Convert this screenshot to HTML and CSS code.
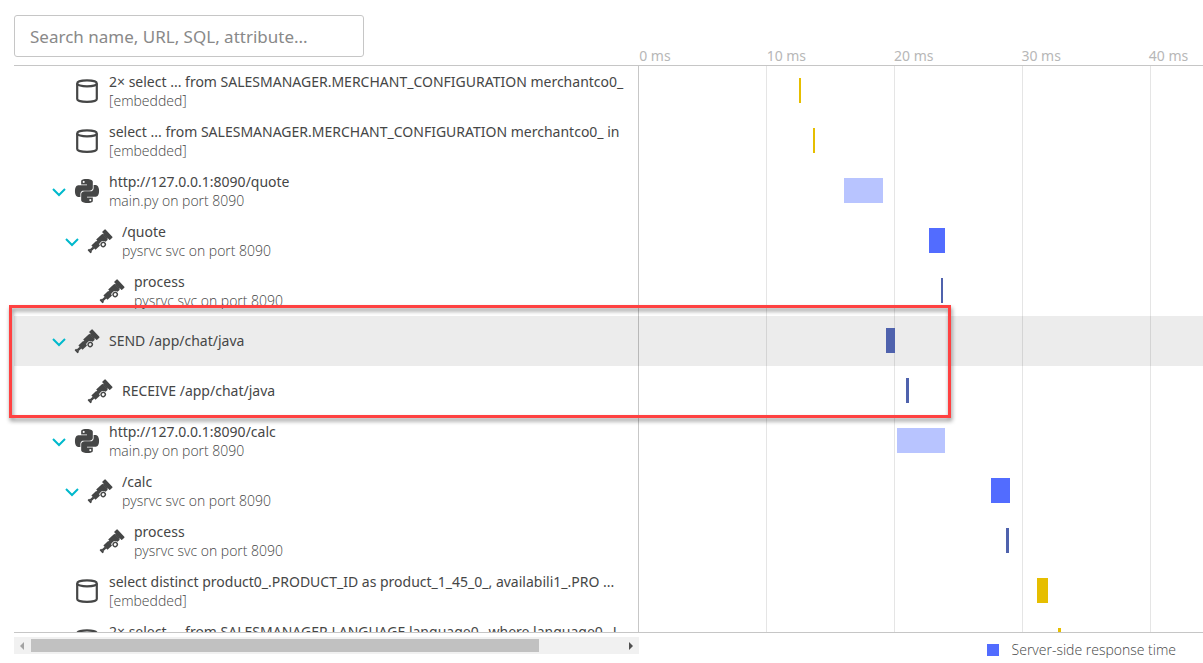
FILE: index.html
```html
<!DOCTYPE html>
<html lang="en">
<head>
<meta charset="utf-8">
<title>Distributed trace</title>
<link rel="stylesheet" href="styles.css">
</head>
<body>
<svg class="sprite" aria-hidden="true">
  <symbol id="db" viewBox="0 0 24 24"><g fill="none" stroke="currentColor" stroke-width="2.200"><ellipse cx="12" cy="4.400" rx="9.800" ry="3"/><path d="M2.200 4.400v15.600c0 1.800 4.200 2.900 9.800 2.900s9.800-1.100 9.800-2.900V4.400"/></g></symbol>
  <symbol id="python" viewBox="0 0 24 24"><path fill="currentColor" d="M14.25.18l.9.2.73.26.59.3.45.32.34.34.25.34.16.33.1.3.04.26.02.2-.01.13V8.500l-.05.63-.13.55-.21.46-.26.38-.3.31-.33.25-.35.19-.35.14-.33.1-.3.07-.26.04-.21.02H8.770l-.69.05-.59.14-.5.22-.41.27-.33.32-.27.35-.2.36-.15.37-.1.35-.07.32-.04.27-.02.21v3.060H3.170l-.21-.03-.28-.07-.32-.12-.35-.18-.36-.26-.36-.36-.35-.46-.32-.59-.28-.73-.21-.88-.14-1.050-.05-1.230.06-1.220.16-1.040.24-.87.32-.71.36-.57.4-.44.42-.33.42-.24.4-.16.36-.1.32-.05.24-.01h.16l.06.01h8.160v-.83H6.180l-.01-2.750-.02-.37.05-.34.11-.31.17-.28.25-.26.31-.23.38-.2.44-.18.51-.15.58-.12.64-.1.71-.06.77-.04.84-.02 1.270.05zm-6.300 1.980l-.23.33-.08.41.08.41.23.34.33.22.41.09.41-.09.33-.22.23-.34.08-.41-.08-.41-.23-.33-.33-.22-.41-.09-.41.09zm13.090 3.950l.28.06.32.12.35.18.36.27.36.35.35.47.32.59.28.73.21.88.14 1.040.05 1.230-.06 1.230-.16 1.040-.24.86-.32.71-.36.57-.4.45-.42.33-.42.24-.4.16-.36.09-.32.05-.24.02-.16-.01h-8.220v.82h5.840l.01 2.760.02.36-.05.34-.11.31-.17.29-.25.25-.31.24-.38.2-.44.17-.51.15-.58.13-.64.09-.71.07-.77.04-.84.01-1.270-.04-1.070-.14-.9-.2-.73-.25-.59-.3-.45-.33-.34-.34-.25-.34-.16-.33-.1-.3-.04-.25-.02-.2.01-.13v-5.340l.05-.64.13-.54.21-.46.26-.38.3-.32.33-.24.35-.2.35-.14.33-.1.3-.06.26-.04.21-.02.13-.01h5.840l.69-.05.59-.14.5-.21.41-.28.33-.32.27-.35.2-.36.15-.36.1-.35.07-.32.04-.28.02-.21V6.070h2.090l.14.01zm-6.470 14.250l-.23.33-.08.41.08.41.23.33.33.23.41.08.41-.08.33-.23.23-.33.08-.41-.08-.41-.23-.33-.33-.23-.41-.08-.41.08z"/></symbol>
  <symbol id="scope" viewBox="0 0 24 24"><g transform="translate(12 12.500) rotate(-43)"><g fill="currentColor"><rect x="-15" y="-2.200" width="2.200" height="4.400" rx=".5"/><rect x="-13" y="-1.200" width="4.500" height="2.400"/><path d="M-9-3h6.500v5.100l-.5.900h-6z"/><path d="M-1.500-4H7v8H3.900a3.600 3.600 0 0 0-5.400-2.700z"/><rect x="8" y="-5.600" width="4.200" height="11.200" rx=".6"/><rect x="-3" y="-2.500" width="2" height="3.500"/><rect x="6.500" y="-3" width="2" height="6"/></g><circle cx=".3" cy="4.400" r="2.100" fill="none" stroke="currentColor" stroke-width="1.400"/></g></symbol>
  <symbol id="chevron" viewBox="0 0 14 14"><path d="M1 5l6 6 6-6" fill="none" stroke="currentColor" stroke-width="2"/></symbol>
</svg>
<main class="trace">
  <header class="head">
    <div class="search"><input class="search-input" type="text" aria-label="Search spans" placeholder="Search name, URL, SQL, attribute..."></div>
    <div class="axis"><span>0 ms</span><span>10 ms</span><span>20 ms</span><span>30 ms</span><span>40 ms</span></div>
  </header>
  <section class="view">
    <div class="rows">
      <div class="grid" aria-hidden="true"><i></i><i></i><i></i><i></i></div>
      <div class="row"><div class="name"><span class="toggle"></span><svg class="icon"><use href="#db"/></svg><div class="label"><div class="title">2× select ... from SALESMANAGER.MERCHANT_CONFIGURATION merchantco0_</div><div class="sub">[embedded]</div></div></div><div class="lane"><div class="bar db" style="margin-left:28.55%;width:.36%"></div></div></div>
      <div class="row"><div class="name"><span class="toggle"></span><svg class="icon"><use href="#db"/></svg><div class="label"><div class="title">select ... from SALESMANAGER.MERCHANT_CONFIGURATION merchantco0_ in</div><div class="sub">[embedded]</div></div></div><div class="lane"><div class="bar db" style="margin-left:30.86%;width:.36%"></div></div></div>
      <div class="row"><div class="name"><button class="toggle" aria-label="Collapse"><svg><use href="#chevron"/></svg></button><svg class="icon"><use href="#python"/></svg><div class="label"><div class="title">http://127.0.0.1:8090/quote</div><div class="sub">main.py on port 8090</div></div></div><div class="lane"><div class="bar pale" style="margin-left:36.35%;width:6.92%"></div></div></div>
      <div class="row"><div class="name level-2"><button class="toggle" aria-label="Collapse"><svg><use href="#chevron"/></svg></button><svg class="icon"><use href="#scope"/></svg><div class="label"><div class="title">/quote</div><div class="sub">pysrvc svc on port 8090</div></div></div><div class="lane"><div class="bar" style="margin-left:51.42%;width:2.84%"></div></div></div>
      <div class="row"><div class="name level-3"><span class="toggle"></span><svg class="icon"><use href="#scope"/></svg><div class="label"><div class="title">process</div><div class="sub">pysrvc svc on port 8090</div></div></div><div class="lane"><div class="bar dark" style="margin-left:53.55%;width:.36%"></div></div></div>
      <div class="marked">
        <div class="row selected"><div class="name"><button class="toggle" aria-label="Collapse"><svg><use href="#chevron"/></svg></button><svg class="icon"><use href="#scope"/></svg><div class="label single"><div class="title">SEND /app/chat/java</div></div></div><div class="lane"><div class="bar dark" style="margin-left:43.8%;width:1.6%"></div></div></div>
        <div class="row"><div class="name level-2"><span class="toggle"></span><svg class="icon"><use href="#scope"/></svg><div class="label single"><div class="title">RECEIVE /app/chat/java</div></div></div><div class="lane"><div class="bar dark" style="margin-left:47.35%;width:.54%"></div></div></div>
        <div class="callout"></div>
      </div>
      <div class="row"><div class="name"><button class="toggle" aria-label="Collapse"><svg><use href="#chevron"/></svg></button><svg class="icon"><use href="#python"/></svg><div class="label"><div class="title">http://127.0.0.1:8090/calc</div><div class="sub">main.py on port 8090</div></div></div><div class="lane"><div class="bar pale" style="margin-left:45.75%;width:8.52%"></div></div></div>
      <div class="row"><div class="name level-2"><button class="toggle" aria-label="Collapse"><svg><use href="#chevron"/></svg></button><svg class="icon"><use href="#scope"/></svg><div class="label"><div class="title">/calc</div><div class="sub">pysrvc svc on port 8090</div></div></div><div class="lane"><div class="bar" style="margin-left:62.42%;width:3.37%"></div></div></div>
      <div class="row"><div class="name level-3"><span class="toggle"></span><svg class="icon"><use href="#scope"/></svg><div class="label"><div class="title">process</div><div class="sub">pysrvc svc on port 8090</div></div></div><div class="lane"><div class="bar dark" style="margin-left:65.08%;width:.54%"></div></div></div>
      <div class="row"><div class="name"><span class="toggle"></span><svg class="icon"><use href="#db"/></svg><div class="label"><div class="title">select distinct product0_.PRODUCT_ID as product_1_45_0_, availabili1_.PRO ...</div><div class="sub">[embedded]</div></div></div><div class="lane"><div class="bar db" style="margin-left:70.57%;width:1.96%"></div></div></div>
      <div class="row"><div class="name"><span class="toggle"></span><svg class="icon"><use href="#db"/></svg><div class="label"><div class="title">2× select ... from SALESMANAGER.LANGUAGE language0_ where language0_.L</div></div></div><div class="lane"><div class="bar db" style="margin-left:74.3%;width:.54%"></div></div></div>
    </div>
  </section>
  <footer class="foot">
    <div class="scroll">
      <button class="arrow" aria-label="Scroll left" disabled><svg viewBox="0 0 17 17"><path d="M10 5v8L6 9z" fill="currentColor"/></svg></button>
      <div class="track"><div class="thumb"></div></div>
      <button class="arrow" aria-label="Scroll right"><svg viewBox="0 0 17 17"><path d="M7 5v8l4-4z" fill="currentColor"/></svg></button>
    </div>
    <div class="legend"><span class="swatch"></span>Server-side response time</div>
  </footer>
</main>
</body>
</html>
```
FILE: styles.css
```css
* { box-sizing: border-box; }
body { margin: 0; background: #fff; color: #454646; font: 14px/19px "Noto Sans", "Open Sans", sans-serif; }
button { padding: 0; border: 0; background: none; font: inherit; }
svg { display: block; overflow: visible; }
.sprite { position: absolute; width: 0; height: 0; }
.sprite symbol { overflow: visible; }
.trace { --names: 52.5%; display: flex; flex-direction: column; height: 100vh; overflow: hidden; }

.head { display: flex; align-items: flex-end; margin-left: 14px; padding-top: 15px; border-bottom: 1px solid #c6c6c6; }
.search { flex: 0 0 var(--names); padding-bottom: 8px; }
.search-input { display: block; width: 350px; height: 42px; padding: 0 15px; border: 1px solid #c6c6c6; border-radius: 3px; background: #fff; color: #454646; font: 17px "Noto Sans", sans-serif; }
.search-input::placeholder { color: #898989; opacity: 1; }
.axis { display: flex; flex: 1; overflow: hidden; padding-left: 1px; color: #b7b7b7; }
.axis span { flex: 0 0 22.6%; white-space: nowrap; }

.view { flex: 1; min-height: 0; overflow: hidden; padding-left: 14px; }
.rows { position: relative; }
.grid { position: absolute; z-index: 1; top: 0; right: 0; bottom: 0; left: var(--names); display: flex; overflow: hidden; border-left: 1px solid rgba(0, 0, 0, .22); pointer-events: none; }
.grid i { flex: 0 0 22.7%; border-right: 1px solid rgba(0, 0, 0, .1); }
.row { display: flex; height: 50px; }
.selected { background: #ececec; }
.name { display: flex; flex: 0 0 var(--names); align-items: center; min-width: 0; padding: 0 8px 0 38px; }
.level-2 { padding-left: 51px; }
.level-3 { padding-left: 63px; }
.toggle { flex: none; width: 14px; height: 14px; margin-right: 9px; color: #00b9cc; }
.toggle svg { width: 14px; height: 14px; }
.icon { flex: none; width: 24px; height: 24px; margin-right: 10px; }
.label { flex: 1; min-width: 0; height: 38px; overflow: hidden; white-space: nowrap; }
.single { height: auto; padding-bottom: 2px; }
.sub { font-family: "Open Sans", sans-serif; font-weight: 300; }
.lane { flex: 1; min-width: 0; padding-top: 12px; }
.bar { position: relative; z-index: 2; height: 25px; background: #526cff; }
.bar.db { background: #e6be00; }
.bar.pale { background: #b8c4ff; }
.bar.dark { background: #4f62ad; }

.marked { position: relative; }
.callout { position: absolute; z-index: 3; top: -11px; right: 21.2%; bottom: -2px; left: -5px; border: 3px solid #ff4141; filter: drop-shadow(1px 3px 2px rgba(0, 0, 0, .45)); pointer-events: none; }

.foot { display: flex; flex: none; align-items: flex-start; justify-content: space-between; height: 31px; padding-right: 27px; margin-left: 14px; border-top: 1px solid #c6c6c6; }
.scroll { display: flex; width: calc(var(--names) + 15px); height: 17px; margin-top: 4px; background: #f1f1f1; }
.arrow { flex: none; width: 17px; height: 17px; color: #505050; }
.arrow:disabled { color: #a3a3a3; }
.track { flex: 1; padding: 2px 0; }
.thumb { width: 86%; height: 13px; background: #c1c1c1; }
.legend { display: flex; align-items: center; gap: 13px; margin-top: 7px; font-family: "Open Sans", sans-serif; font-weight: 300; }
.swatch { width: 12px; height: 12px; background: #526cff; }
```
